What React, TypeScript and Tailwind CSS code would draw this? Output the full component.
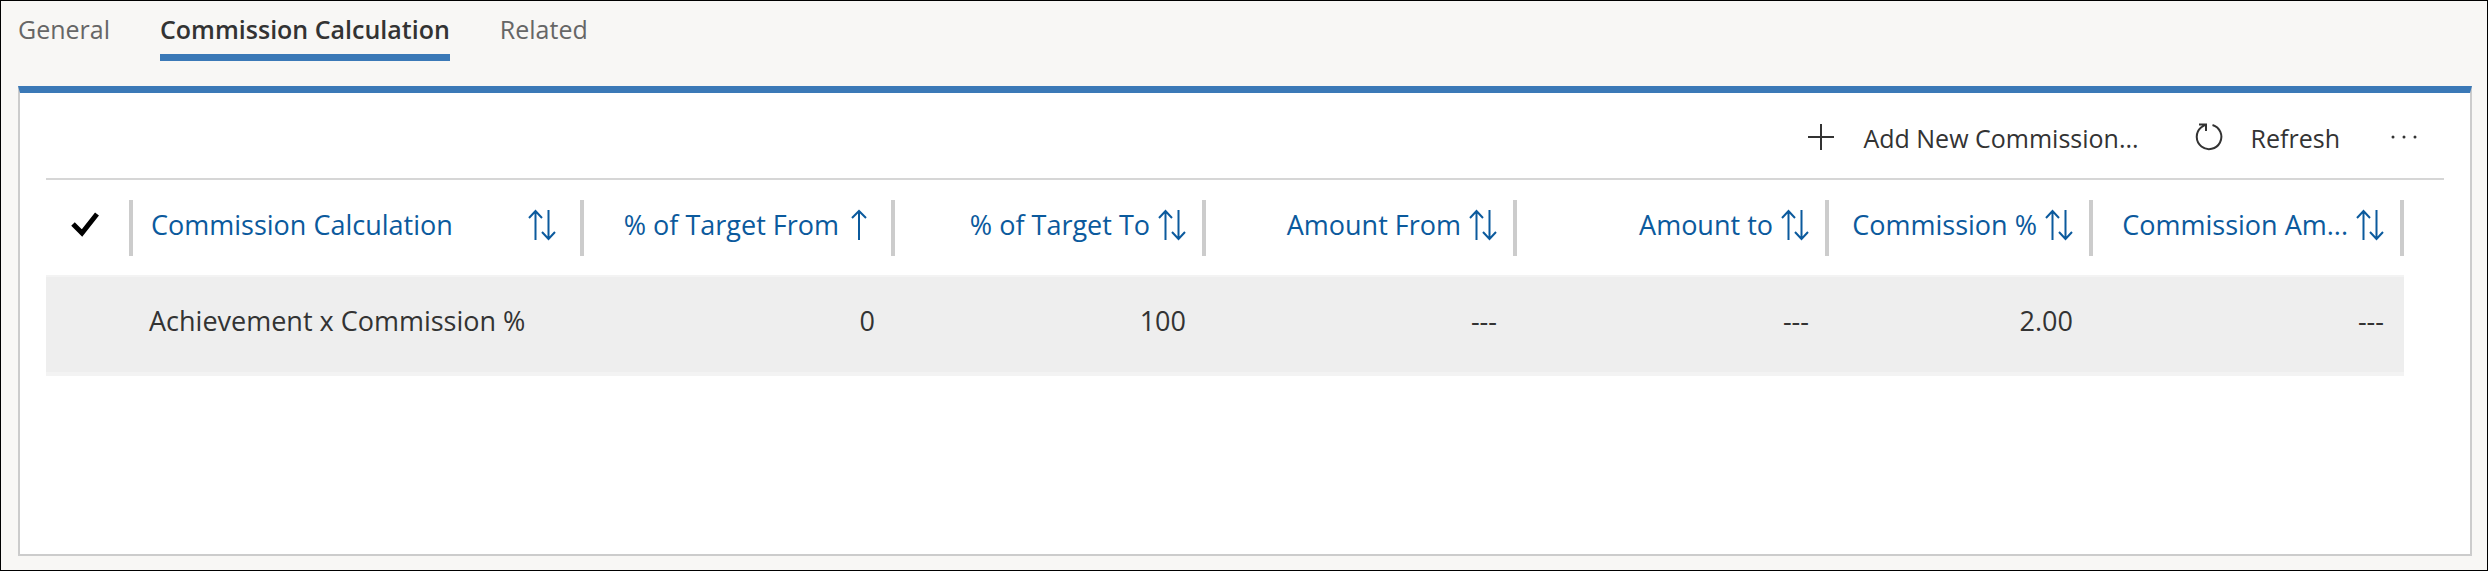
import { useState } from "react"

const tabs = ['General', 'Commission Calculation', 'Related']

const columns = [
  { label: 'Commission Calculation', sort: 'both', align: 'left' },
  { label: '% of Target From', sort: 'up', align: 'right' },
  { label: '% of Target To', sort: 'both', align: 'right' },
  { label: 'Amount From', sort: 'both', align: 'right' },
  { label: 'Amount to', sort: 'both', align: 'right' },
  { label: 'Commission %', sort: 'both', align: 'right' },
  { label: 'Commission Am...', sort: 'both', align: 'right' },
]

const rows = [
  ['Achievement x Commission %', '0', '100', '---', '---', '2.00', '---'],
]

const SortBoth = () => (
  <svg className="w-7 h-8 shrink-0" viewBox="0 0 28 32" fill="none" stroke="currentColor" strokeWidth="2" aria-hidden="true">
    <path d="M7.5 31V2M1 9l6.5-7L14 9M20.5 1v29M14 23l6.5 7 6.5-7" />
  </svg>
)

const SortUp = () => (
  <svg className="w-4 h-8 shrink-0" viewBox="0 0 16 32" fill="none" stroke="currentColor" strokeWidth="2" aria-hidden="true">
    <path d="M8 31V2M1 9l7-7 7 7" />
  </svg>
)

const App = () => {
  const [active, setActive] = useState('Commission Calculation')

  return (
    <div className="flex flex-col min-h-screen border border-black bg-[#f8f7f5] pl-[17px] pr-[15px] pb-3.5 font-['Open_Sans','Noto_Sans',sans-serif] text-[#333333]">
      <nav role="tablist" className="flex items-start gap-[50px] h-[85px] pt-2.5 text-[25px]">
        {tabs.map((tab) => (
          <button
            key={tab}
            role="tab"
            aria-selected={tab === active}
            onClick={() => setActive(tab)}
            className={tab === active
              ? 'h-[50px] border-b-[7px] border-[#3b79b7] font-semibold leading-9 pb-2'
              : 'h-[50px] leading-9 pb-4 text-[#666666]'}
          >
            {tab}
          </button>
        ))}
      </nav>

      <main className="flex-1 border-2 border-t-[7px] border-[#cccccc] border-t-[#3b79b7] bg-white px-[26px]">
        <div className="flex items-center justify-end h-[87px] pt-1.5 pr-[26px] border-b-2 border-[#d6d6d6] text-[25px]">
          <button className="flex items-center gap-7">
            <svg className="w-7 h-7 mb-1" viewBox="0 0 28 28" fill="none" stroke="currentColor" strokeWidth="2" aria-hidden="true">
              <path d="M14 1v26M1 14h26" />
            </svg>
            Add New Commission...
          </button>
          <button className="flex items-center gap-7 ml-14">
            <svg className="w-7 h-7 mb-1" viewBox="0 0 28 28" fill="none" stroke="currentColor" strokeWidth="2" aria-hidden="true">
              <path d="M17.5 2A12.3 12.3 0 1 1 6 4.5L10 2M4 1.5h7V8" />
            </svg>
            Refresh
          </button>
          <button aria-label="More commands" className="ml-[50px]">
            <svg className="w-7 h-7 mb-1" viewBox="0 0 28 28" fill="currentColor" aria-hidden="true">
              <circle cx="3" cy="14" r="1.5" />
              <circle cx="14" cy="14" r="1.5" />
              <circle cx="25" cy="14" r="1.5" />
            </svg>
          </button>
        </div>

        <div className="pr-10">
          <table className="w-full table-fixed border-collapse text-[27px]">
            <colgroup>
              <col className="w-[87px]" />
              <col />
              <col className="w-[311px]" />
              <col className="w-[311px]" />
              <col className="w-[311px]" />
              <col className="w-[312px]" />
              <col className="w-[264px]" />
              <col className="w-[311px]" />
            </colgroup>
            <thead>
              <tr className="h-[96px] align-top text-[#0b5a9d]">
                <th className="p-0 pt-5">
                  <button aria-label="Select all" className="flex items-center justify-end w-full h-14 pb-1.5 pr-[30px] border-r-4 border-[#cccccc] text-black">
                    <svg className="w-7 h-7" viewBox="0 0 28 28" fill="none" stroke="currentColor" strokeWidth="5" aria-hidden="true">
                      <path d="M2 13l9 9L26 3" />
                    </svg>
                  </button>
                </th>
                {columns.map((col) => (
                  <th key={col.label} className="p-0 pt-5 font-normal">
                    <button
                      className={col.align === 'left'
                        ? 'flex items-center justify-between w-full h-14 pb-1.5 pl-[18px] pr-6 border-r-4 border-[#cccccc] whitespace-nowrap'
                        : col.sort === 'up'
                          ? 'flex items-center justify-end gap-3 w-full h-14 pb-1.5 pr-6 border-r-4 border-[#cccccc] whitespace-nowrap'
                          : 'flex items-center justify-end gap-2 w-full h-14 pb-1.5 pr-4 border-r-4 border-[#cccccc] whitespace-nowrap'}
                    >
                      {col.label}
                      {col.sort === 'up' ? <SortUp /> : <SortBoth />}
                    </button>
                  </th>
                ))}
              </tr>
            </thead>
            <tbody>
              {rows.map((row) => (
                <tr key={row[0]} className="h-[98px] border-t-2 border-b-4 border-[#f3f3f3] bg-[#eeeeee]">
                  <td className="p-0"></td>
                  {row.map((cell, i) => (
                    <td key={i} className={i === 0 ? 'pt-0 pb-1.5 pl-4 pr-0 text-left' : 'pt-0 pb-1.5 pl-0 pr-5 text-right'}>{cell}</td>
                  ))}
                </tr>
              ))}
            </tbody>
          </table>
        </div>
      </main>
    </div>
  )
}

export default App
